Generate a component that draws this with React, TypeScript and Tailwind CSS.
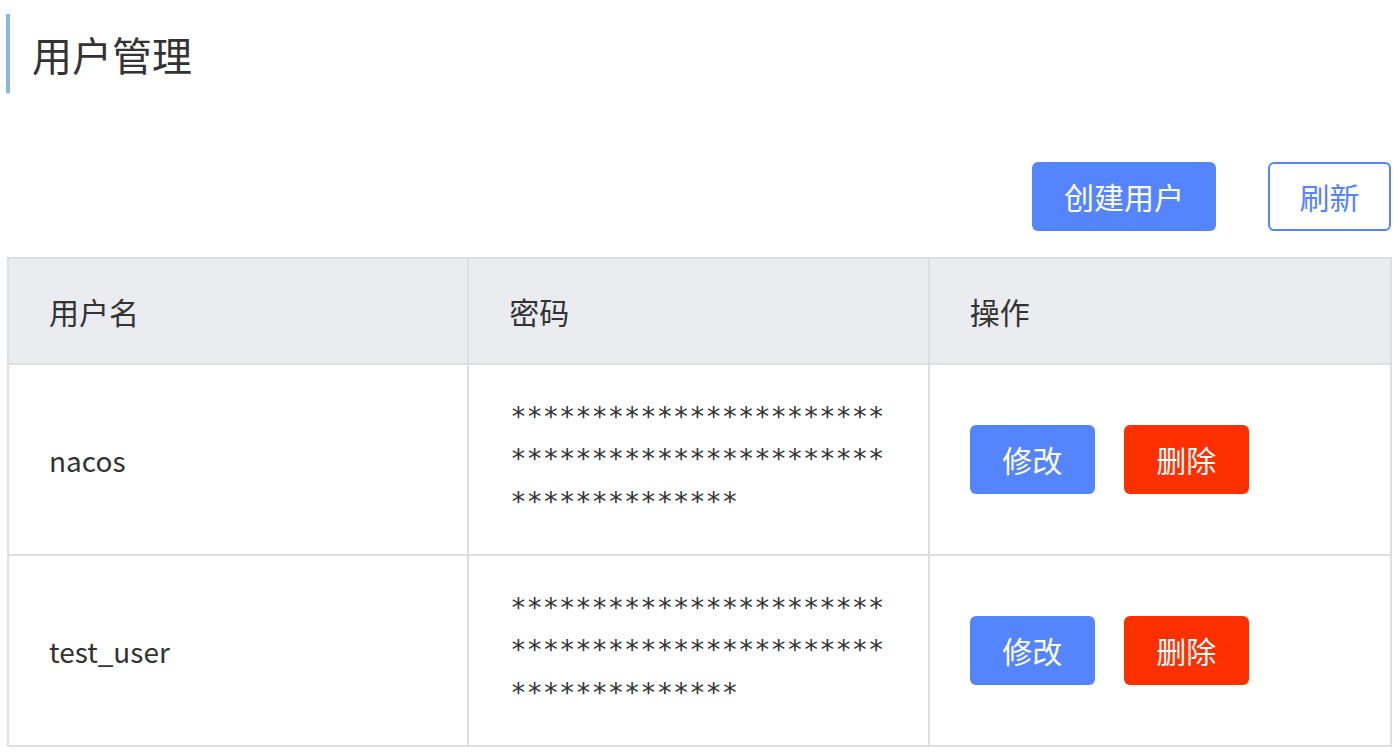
const FONT = { fontFamily: '"Noto Sans CJK SC", "Noto Sans", sans-serif' };
const MONO = { fontFamily: '"DejaVu Sans Mono", "Liberation Mono", monospace' };

const users = [
    { name: "nacos", password: "*".repeat(60) },
    { name: "test_user", password: "*".repeat(60) },
];

const App = () => {
    return (
        <div className="w-[1398px] h-[755px] bg-white text-[#333333] overflow-hidden" style={FONT}>
            <div className="pt-[14px] pl-[6px]">
                <div className="flex items-center h-[79px] border-l-4 border-[#88b7e0] pl-[22px]">
                    <h1 className="text-[40px] leading-none font-normal text-[#333333]">用户管理</h1>
                </div>
            </div>

            <div className="flex justify-end items-center gap-[52px] mt-[69px] pr-[7px]">
                <button className="w-[184px] h-[69px] rounded-[6px] bg-[#5584ff] text-white text-[30px]">
                    创建用户
                </button>
                <button className="w-[123px] h-[69px] rounded-[6px] border-2 border-[#5584ff] bg-white text-[#5584ff] text-[30px]">
                    刷新
                </button>
            </div>

            <div className="mt-[26px] ml-[7px] w-[1385px] border-2 border-[#dcdee3]">
                <div className="grid grid-cols-3 bg-[#ebecf0] h-[104px] text-[30px]">
                    <div className="flex items-center pl-[40px] border-r-2 border-[#dcdee3]">用户名</div>
                    <div className="flex items-center pl-[40px] border-r-2 border-[#dcdee3]">密码</div>
                    <div className="flex items-center pl-[40px]">操作</div>
                </div>
                {users.map((u) => (
                    <div key={u.name} className="grid grid-cols-3 h-[191px] border-t-2 border-[#dcdee3]">
                        <div className="flex items-center pl-[40px] border-r-2 border-[#dcdee3] text-[28px]">
                            {u.name}
                        </div>
                        <div className="flex items-center pl-[41px] pr-[40px] border-r-2 border-[#dcdee3]">
                            <p className="break-all text-[27px] leading-[42.5px]" style={MONO}>
                                {u.password}
                            </p>
                        </div>
                        <div className="flex items-center gap-[29px] pl-[40px]">
                            <button className="w-[125px] h-[69px] rounded-[6px] bg-[#5584ff] text-white text-[30px]">
                                修改
                            </button>
                            <button className="w-[125px] h-[69px] rounded-[6px] bg-[#ff3000] text-white text-[30px]">
                                删除
                            </button>
                        </div>
                    </div>
                ))}
            </div>
        </div>
    );
};

export default App;
